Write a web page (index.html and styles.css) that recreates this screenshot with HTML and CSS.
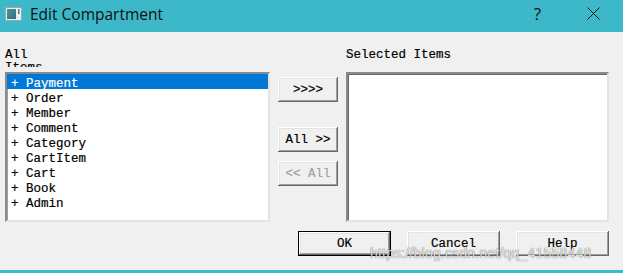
FILE: index.html
```html
<!DOCTYPE html>
<html>
<head>
<meta charset="utf-8">
<link rel="stylesheet" href="styles.css">
</head>
<body>
<div class="window">
  <div class="titlebar">
    <svg class="app-icon" width="17" height="14" viewBox="0 0 17 14">
      <defs>
        <linearGradient id="g" x1="0" y1="0" x2="1" y2="1">
          <stop offset="0" stop-color="#4a9a8a"/>
          <stop offset="1" stop-color="#2e6f8a"/>
        </linearGradient>
      </defs>
      <rect x="0.5" y="0.5" width="16" height="13" fill="#e8eef0" stroke="#9aa8ae"/>
      <rect x="2" y="2" width="9" height="10" fill="url(#g)"/>
      <rect x="13" y="2" width="1.5" height="5" fill="#5a7a86"/>
    </svg>
    <span class="title">Edit Compartment</span>
    <span class="help">?</span>
    <svg class="close" width="13" height="13" viewBox="0 0 13 13">
      <path d="M0.5 0.5 L12.5 12.5 M12.5 0.5 L0.5 12.5" stroke="#111" stroke-width="1"/>
    </svg>
  </div>
  <div class="client">
    <div class="panes">
      <div class="col col-left">
        <div class="label label-all">All Items</div>
        <div class="listbox listbox-left">
          <div class="item selected">+ Payment</div>
          <div class="item">+ Order</div>
          <div class="item">+ Member</div>
          <div class="item">+ Comment</div>
          <div class="item">+ Category</div>
          <div class="item">+ CartItem</div>
          <div class="item">+ Cart</div>
          <div class="item">+ Book</div>
          <div class="item">+ Admin</div>
        </div>
      </div>
      <div class="col col-mid">
        <div class="btn btn-small">&gt;&gt;&gt;&gt;</div>
        <div class="btn btn-small btn-all">All &gt;&gt;</div>
        <div class="btn btn-small btn-disabled">&lt;&lt; All</div>
      </div>
      <div class="col col-right">
        <div class="label">Selected Items</div>
        <div class="listbox listbox-right"></div>
      </div>
    </div>
    <div class="actions">
      <div class="btn btn-wide btn-default">OK</div>
      <div class="btn btn-wide">Cancel</div>
      <div class="btn btn-wide">Help</div>
    </div>
    <div class="watermark">https://blog.csdn.net/qq_41558448</div>
  </div>
  <div class="bottom-edge"></div>
</div>
</body>
</html>
```
FILE: styles.css
```css
html, body {
  margin: 0;
  padding: 0;
}
body {
  width: 623px;
  height: 273px;
  overflow: hidden;
  background: #f0f0f0;
}
.window {
  width: 623px;
  height: 273px;
  display: flex;
  flex-direction: column;
}
.titlebar {
  height: 32px;
  background: #3db8c9;
  display: flex;
  align-items: center;
  flex-shrink: 0;
}
.app-icon {
  margin-left: 5px;
  margin-top: -4px;
}
.title {
  margin-left: 8px;
  font-family: "Open Sans", "Noto Sans", sans-serif;
  font-size: 15.5px;
  color: #111;
  margin-top: -5px;
  flex: 1;
}
.help {
  font-family: "Open Sans", "Noto Sans", sans-serif;
  font-size: 17px;
  color: #111;
  margin-right: 46px;
  margin-top: -5px;
}
.close {
  margin-right: 23px;
  margin-top: -5px;
}
.client {
  position: relative;
  flex: 1;
  padding: 13px 14px 0 5px;
  font-family: "Liberation Mono", monospace;
  font-size: 12.5px;
  color: #000;
  -webkit-text-stroke: 0.2px currentColor;
}
.panes {
  display: flex;
  align-items: flex-start;
}
.col-left {
  width: 265px;
}
.col-right {
  width: 263px;
}
.col-mid {
  width: 60px;
  margin: 0 8px;
  padding-top: 32px;
  display: flex;
  flex-direction: column;
}
.label {
  margin-top: 4px;
  height: 23px;
  line-height: 13px;
  overflow: hidden;
}
.label-all {
  width: 40px;
  height: 18px;
  margin-bottom: 5px;
}
.listbox {
  height: 150px;
  box-sizing: border-box;
  background: #fff;
  border-style: solid;
  border-width: 2px;
  border-color: #8a8a8a #e3e3e3 #e3e3e3 #8a8a8a;
  box-shadow: inset 1px 1px 0 #696969;
  overflow: hidden;
}
.listbox-left {
  box-shadow: inset 1px 1px 0 #a0a0a0;
}
.item {
  height: 12px;
  padding: 3px 0 0 4px;
  line-height: 15px;
  white-space: pre;
}
.item.selected {
  background: #0078d7;
  color: #fff;
}
.btn {
  box-sizing: border-box;
  height: 25px;
  background: #f0f0f0;
  display: flex;
  align-items: center;
  justify-content: center;
  padding-top: 1px;
  box-shadow:
    inset -1px -1px 0 #696969,
    inset 1px 1px 0 #ffffff,
    inset -2px -2px 0 #a0a0a0,
    inset 2px 2px 0 #e3e3e3;
  white-space: pre;
}
.btn-small {
  width: 60px;
}
.btn-all {
  margin-top: 25px;
}
.btn-disabled {
  margin-top: 9px;
  color: #a0a0a0;
}
.actions {
  display: flex;
  justify-content: flex-end;
  gap: 16px;
  margin-top: 9px;
}
.btn-wide {
  width: 93px;
}
.btn-default {
  border: 1px solid #000;
}
.watermark {
  position: absolute;
  left: 370px;
  top: 213px;
  font-family: "Liberation Sans", Arial, sans-serif;
  font-size: 14px;
  color: rgba(255, 255, 255, 0.85);
  -webkit-text-stroke: 0;
  text-shadow:
    0 0 1px rgba(0, 0, 0, 0.5),
    0 0 1px rgba(0, 0, 0, 0.35);
  letter-spacing: 0.2px;
  white-space: nowrap;
}
.bottom-edge {
  height: 3px;
  background: #3db8c9;
  flex-shrink: 0;
}
```
